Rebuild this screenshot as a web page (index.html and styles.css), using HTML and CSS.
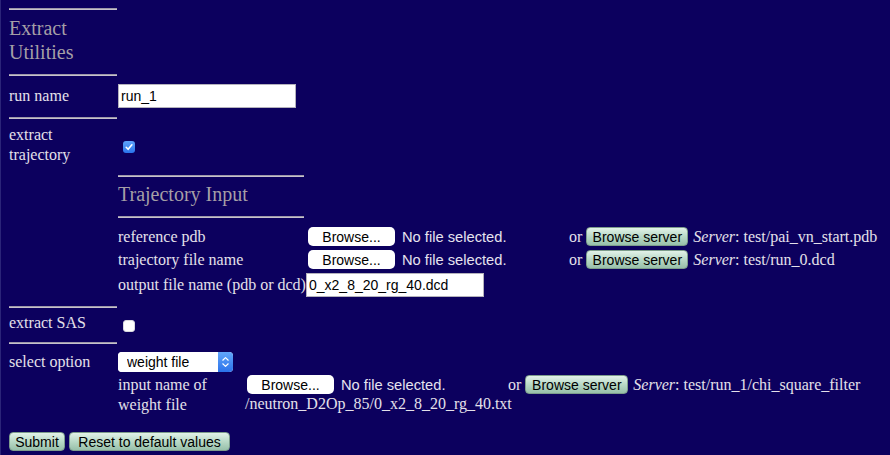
FILE: index.html
```html
<!DOCTYPE html>
<html>
<head>
<meta charset="utf-8">
<title>Extract Utilities</title>
<link rel="stylesheet" href="styles.css">
</head>
<body>
<form class="page">
  <hr class="rule r-top">
  <h2 class="title">Extract<br>Utilities</h2>
  <hr class="rule r-a">

  <div class="row run">
    <label class="lbl">run name</label>
    <input class="text run-in" type="text" value="run_1">
  </div>
  <hr class="rule r-b">

  <div class="row traj">
    <label class="lbl">extract trajectory</label>
    <span class="cb checked"><svg width="12" height="12" viewBox="0 0 12 12"><path d="M3.2 6.3 L5.1 8.3 L8.9 3.8" fill="none" stroke="#fff" stroke-width="1.6" stroke-linecap="round" stroke-linejoin="round"/></svg></span>
  </div>

  <div class="sub">
    <hr class="subrule s-a">
    <h3 class="subtitle">Trajectory Input</h3>
    <hr class="subrule s-b">

    <div class="frow f1">
      <span class="flbl">reference pdb</span>
      <div class="val">
        <span class="filectl"><button type="button" class="filebtn">Browse...</button><span class="nofile">No file selected.</span></span>
        <span>or</span>
        <button type="button" class="srvbtn">Browse server</button>
        <span class="srv"><i>Server</i>: test/pai_vn_start.pdb</span>
      </div>
    </div>
    <div class="frow f2">
      <span class="flbl">trajectory file name</span>
      <div class="val">
        <span class="filectl"><button type="button" class="filebtn">Browse...</button><span class="nofile">No file selected.</span></span>
        <span>or</span>
        <button type="button" class="srvbtn">Browse server</button>
        <span class="srv"><i>Server</i>: test/run_0.dcd</span>
      </div>
    </div>
    <div class="frow f3">
      <span class="flbl">output file name (pdb or dcd)</span>
      <input class="text out-in" type="text" value="0_x2_8_20_rg_40.dcd">
    </div>
  </div>

  <hr class="rule r-c">
  <div class="row sas">
    <label class="lbl">extract SAS</label>
    <span class="cb"></span>
  </div>
  <hr class="rule r-d">

  <div class="row sel">
    <label class="lbl">select option</label>
    <span class="selbox">
      <select class="selin"><option>weight file</option></select>
      <span class="arrows"><svg width="15" height="20" viewBox="0 0 15 20"><path d="M4.8 8.2 L7.5 5.6 L10.2 8.2 M4.8 11.8 L7.5 14.4 L10.2 11.8" fill="none" stroke="#fff" stroke-width="1.2" stroke-linecap="round" stroke-linejoin="round"/></svg></span>
    </span>
  </div>

  <div class="weight">
    <span class="wlbl">input name of weight file</span>
    <div class="wcell">
      <div class="val">
        <span class="filectl"><button type="button" class="filebtn">Browse...</button><span class="nofile">No file selected.</span></span>
        <span>or</span>
        <button type="button" class="srvbtn w">Browse server</button>
        <span class="srv"><i>Server</i>: test/run_1/chi_square_filter</span>
      </div>
      <div class="wrapline">/neutron_D2Op_85/0_x2_8_20_rg_40.txt</div>
    </div>
  </div>

  <div class="actions">
    <button type="button" class="srvbtn submit">Submit</button>
    <button type="button" class="srvbtn reset">Reset to default values</button>
  </div>
</form>
</body>
</html>
```

FILE: styles.css
```css
html {
  background: #0c005e;
  box-shadow: inset 1px 0 0 #2b2478;
  min-height: 100%;
}
body {
  margin: 8px;
  font-family: "Liberation Serif", "Times New Roman", serif;
  font-size: 16px;
  line-height: 20px;
  color: #e4e0ea;
}
.page {
  padding-left: 1px;
}
.rule, .subrule {
  border: 0;
  border-top: 1px solid #9d98a8;
  border-bottom: 1px solid #c6c2cc;
  height: 0;
  margin: 0;
  width: 108px;
}
.subrule { width: 186px; }
.r-top { margin-top: 0; }
.r-a { margin-top: 10px; }
.r-b { margin-top: 9px; }
.r-c { margin-top: 9px; }
.r-d { margin-top: 9px; }
.s-a { margin-top: 10px; }
.s-b { margin-top: 10px; }

.title, .subtitle {
  margin: 0;
  font-weight: normal;
  font-size: 20px;
  line-height: 24px;
  color: #a59fa6;
}
.title { margin-top: 6px; }
.subtitle { margin-top: 5px; }

.row {
  display: flex;
  align-items: flex-start;
}
.lbl {
  box-sizing: border-box;
  width: 109px;
  flex: none;
}
.run { margin-top: 8px; height: 24px; align-items: center; }
.traj { margin-top: 6px; height: 40px; }
.traj .lbl { padding-right: 12px; }
.traj .cb { margin-top: 16px; }
.sas { margin-top: 5px; height: 20px; }
.sas .cb { margin-top: 7px; }
.sel { margin-top: 8px; height: 20px; }

.text {
  box-sizing: border-box;
  width: 178px;
  height: 24px;
  border: 1px solid #b4b2bc;
  background: #fff;
  padding: 0 2px;
  font-family: "Liberation Sans", Arial, sans-serif;
  font-size: 14px;
  color: #000;
  margin: 0;
  outline: none;
}

.cb {
  box-sizing: border-box;
  display: block;
  width: 12px;
  height: 12px;
  margin-left: 5px;
  border-radius: 3px;
  background: #fff;
  border: 1px solid #d8d8de;
}
.cb svg { display: block; }
.cb.checked {
  border: 0;
  background: linear-gradient(#5fa4fb, #2a74ec);
}

.sub { margin-left: 109px; }
.frow {
  display: flex;
  align-items: center;
  white-space: nowrap;
}
.f1 { margin-top: 9px; height: 19px; }
.f2 { margin-top: 4px; height: 19px; }
.f3 { margin-top: 4px; height: 24px; }
.flbl { width: 188px; flex: none; }

.val {
  display: flex;
  align-items: center;
  gap: 4px;
  white-space: nowrap;
  height: 19px;
}
.filectl {
  display: flex;
  align-items: center;
  width: 259px;
  flex: none;
}
.filebtn {
  margin: 0 0 0 2px;
  width: 87px;
  height: 19px;
  padding: 0;
  border: 0;
  border-radius: 5px;
  background: #fff;
  font-family: "Liberation Sans", Arial, sans-serif;
  font-size: 14px;
  color: #000;
}
.nofile {
  margin-left: 7px;
  font-family: "Liberation Sans", Arial, sans-serif;
  font-size: 14.7px;
  color: #e6e3ee;
}
.srvbtn {
  box-sizing: border-box;
  height: 19px;
  width: 102px;
  padding: 0;
  margin: 0;
  border: 1px solid #7d9d8c;
  border-radius: 4px;
  background: linear-gradient(#e2f2e8, #b9d9c7 50%, #98c0aa);
  font-family: "Liberation Sans", Arial, sans-serif;
  font-size: 14px;
  color: #000;
  flex: none;
}
.srvbtn.w { width: 103px; }
.srv { margin-left: 1px; }

.selbox {
  display: flex;
  width: 115px;
  height: 20px;
  border-radius: 4px;
  overflow: hidden;
  background: #fff;
}
.selin {
  -webkit-appearance: none;
  appearance: none;
  border: 0;
  margin: 0;
  width: 100px;
  height: 20px;
  padding: 0 0 0 9px;
  background: #fff;
  font-family: "Liberation Sans", Arial, sans-serif;
  font-size: 14px;
  color: #000;
  outline: none;
}
.arrows {
  width: 15px;
  height: 20px;
  background: linear-gradient(#62a6fa, #2b72ea);
}
.arrows svg { display: block; }

.weight {
  display: flex;
  margin-top: 3px;
  margin-left: 109px;
}
.wlbl {
  width: 127px;
  flex: none;
}
.wcell { display: flex; flex-direction: column; }
.wrapline { white-space: nowrap; }

.actions {
  display: flex;
  gap: 4px;
  margin-top: 17px;
}
.submit { width: 56px; }
.reset { width: 161px; }
```
